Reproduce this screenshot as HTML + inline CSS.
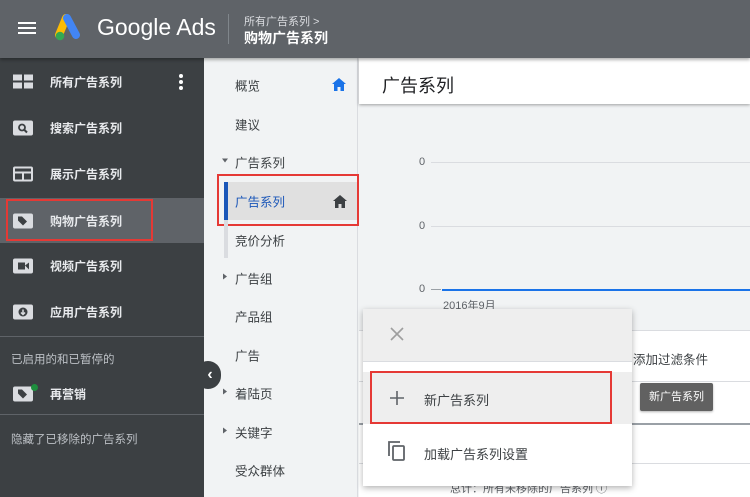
<!DOCTYPE html>
<html><head><meta charset="utf-8"><style>
*{margin:0;padding:0;box-sizing:border-box}
body{width:750px;height:497px;overflow:hidden;position:relative;font-family:"Liberation Sans","Noto Sans CJK SC",sans-serif;background:#f1f3f4}
.a{position:absolute}
.hdr{left:0;top:0;width:750px;height:58px;background:#5f6368;box-shadow:0 2px 3px rgba(0,0,0,.3);z-index:5}
.side{left:0;top:58px;width:204px;height:439px;background:#3c4043}
.it{position:absolute;left:0;width:204px;height:46px;color:#e8eaed;font-size:12px;font-weight:bold}
.it span{position:absolute;left:50px;top:50%;transform:translateY(-50%)}
.it svg{position:absolute;left:13px;top:50%;transform:translateY(-50%)}
.nav{left:204px;top:58px;width:154px;height:439px;background:#f1f3f4;border-right:1px solid #dadce0}
.n{position:absolute;left:31px;font-size:12.5px;color:#3c4043;transform:translateY(-50%)}
.tri{position:absolute;left:-12px;top:5px;width:0;height:0;border-top:3px solid transparent;border-bottom:3px solid transparent;border-left:4px solid #5f6368}
</style></head><body>
<div class="a hdr">
 <div class="a" style="left:18px;top:22px;width:18px;height:2px;background:#fff;box-shadow:0 5px 0 #fff,0 10px 0 #fff"></div>
 <svg class="a" style="left:54px;top:14px" width="30" height="28" viewBox="0 0 30 28"><path d="M12 4 L5 21" stroke="#fbbc04" stroke-width="8" stroke-linecap="round"/><path d="M13 4 L22 21" stroke="#4285f4" stroke-width="8" stroke-linecap="round"/><circle cx="6" cy="22" r="4.3" fill="#34a853"/></svg>
 <div class="a" style="left:97px;top:14px;color:#fff;font-size:23px">Google Ads</div>
 <div class="a" style="left:228px;top:14px;width:1px;height:30px;background:#80868b"></div>
 <div class="a" style="left:244px;top:13px;color:#dadce0;font-size:11px">所有广告系列 &gt;</div>
 <div class="a" style="left:244px;top:28px;color:#fff;font-size:14px;font-weight:bold">购物广告系列</div>
</div>
<div class="a side">
 <div class="it" style="top:1px"><svg width="20" height="15" viewBox="0 0 20 15"><rect x="0" y="0" width="9" height="6" fill="#dadce0"/><rect x="11" y="0" width="9" height="6" fill="#dadce0"/><rect x="0" y="8" width="9" height="6" fill="#dadce0"/><rect x="11" y="8" width="9" height="6" fill="#dadce0"/></svg><span>所有广告系列</span><div class="a" style="left:179px;top:15px;width:4px;height:4px;border-radius:2px;background:#fff;box-shadow:0 6px 0 #fff,0 12px 0 #fff"></div></div>
 <div class="it" style="top:47px"><svg width="20" height="15" viewBox="0 0 20 15"><rect width="20" height="15" rx="2" fill="#dadce0"/><circle cx="9" cy="7" r="3" stroke="#3c4043" stroke-width="1.8" fill="none"/><path d="M11 9 L14 12" stroke="#3c4043" stroke-width="2"/></svg><span>搜索广告系列</span></div>
 <div class="it" style="top:93px"><svg width="20" height="15" viewBox="0 0 20 15"><rect x="1" y="1" width="18" height="13" rx="1" stroke="#dadce0" stroke-width="2" fill="none"/><path d="M1 6 H19 M10 6 V14" stroke="#dadce0" stroke-width="2"/></svg><span>展示广告系列</span></div>
 <div class="it" style="top:140px;background:#5f6368;height:45px"><svg width="20" height="15" viewBox="0 0 20 15"><rect width="20" height="15" rx="2" fill="#dadce0"/><path d="M5 3 H9 L14 8 L10 12 L5 7Z" fill="#3c4043"/></svg><span>购物广告系列</span></div>
 <div class="a" style="left:6px;top:141px;width:147px;height:42px;border:2px solid #e53935"></div>
 <div class="it" style="top:185px"><svg width="20" height="15" viewBox="0 0 20 15"><rect width="20" height="15" rx="2" fill="#dadce0"/><rect x="5" y="4" width="7" height="7" fill="#3c4043"/><path d="M12 7 L16 4 V11Z" fill="#3c4043"/></svg><span>视频广告系列</span></div>
 <div class="it" style="top:231px"><svg width="20" height="15" viewBox="0 0 20 15"><rect width="20" height="15" rx="2" fill="#dadce0"/><circle cx="10" cy="7.5" r="4.5" fill="#3c4043"/><path d="M10 5 V9 M8 8 L10 10 L12 8" stroke="#dadce0" stroke-width="1.5" fill="none"/></svg><span>应用广告系列</span></div>
 <div class="a" style="left:0;top:278px;width:204px;height:1px;background:#5f6368"></div>
 <div class="a" style="left:11px;top:293px;color:#bdc1c6;font-size:11.5px">已启用的和已暂停的</div>
 <div class="it" style="top:313px"><svg width="20" height="15" viewBox="0 0 20 15"><rect width="20" height="15" rx="2" fill="#dadce0"/><path d="M5 3 H9 L14 8 L10 12 L5 7Z" fill="#3c4043"/></svg><div class="a" style="left:31px;top:13px;width:7px;height:7px;border-radius:4px;background:#1e8e3e"></div><span>再营销</span></div>
 <div class="a" style="left:0;top:356px;width:204px;height:1px;background:#5f6368"></div>
 <div class="a" style="left:11px;top:373px;color:#bdc1c6;font-size:11.5px">隐藏了已移除的广告系列</div>
</div>
<div class="a nav">
 <div class="n" style="top:27px">概览</div>
 <svg class="a" style="left:128px;top:20px" width="14" height="13" viewBox="0 0 14 13"><path d="M7 0 L14 6 H12 V13 H8.5 V9 H5.5 V13 H2 V6 H0Z" fill="#1a73e8"/></svg>
 <div class="n" style="top:66px">建议</div>
 <div class="n" style="top:104px"><div class="tri" style="border:3px solid transparent;border-top:4px solid #5f6368;border-bottom:0;left:-13px;top:6px"></div>广告系列</div>
 <div class="a" style="left:20px;top:124px;width:134px;height:38px;background:#e0e0e0"></div>
 <div class="a" style="left:20px;top:124px;width:4px;height:38px;background:#1a56b8"></div>
 <div class="n" style="top:143px;color:#1a56b8">广告系列</div>
 <svg class="a" style="left:129px;top:137px" width="14" height="13" viewBox="0 0 14 13"><path d="M7 0 L14 6 H12 V13 H8.5 V9 H5.5 V13 H2 V6 H0Z" fill="#3c4043"/></svg>
 <div class="a" style="left:13px;top:116px;width:142px;height:52px;border:2px solid #e53935"></div>
 <div class="a" style="left:20px;top:162px;width:4px;height:38px;background:#dadce0"></div>
 <div class="n" style="top:182px">竞价分析</div>
 <div class="n" style="top:220px"><div class="tri"></div>广告组</div>
 <div class="n" style="top:258px">产品组</div>
 <div class="n" style="top:297px">广告</div>
 <div class="n" style="top:335px"><div class="tri"></div>着陆页</div>
 <div class="n" style="top:374px"><div class="tri"></div>关键字</div>
 <div class="n" style="top:412px">受众群体</div>
</div>
<div class="a" style="left:195px;top:361px;width:26px;height:28px;border-radius:14px;background:#3c4043;color:#fff;font-size:16px;font-weight:bold;line-height:28px;text-align:center;padding-left:4px">‹</div>
<div class="a" style="left:359px;top:58px;width:391px;height:46px;background:#fff;box-shadow:0 1px 3px rgba(0,0,0,.35)"></div>
<div class="a" style="left:382px;top:72px;font-size:18px;color:#202124">广告系列</div>
<div class="a" style="left:431px;top:162px;width:319px;height:1px;background:#dadce0"></div>
<div class="a" style="left:431px;top:226px;width:319px;height:1px;background:#dadce0"></div>
<div class="a" style="left:442px;top:289px;width:308px;height:2px;background:#1a73e8"></div>
<div class="a" style="left:431px;top:289px;width:10px;height:1px;background:#9aa0a6"></div>
<div class="a" style="left:419px;top:156px;font-size:11px;color:#5f6368">0</div>
<div class="a" style="left:419px;top:220px;font-size:11px;color:#5f6368">0</div>
<div class="a" style="left:419px;top:283px;font-size:11px;color:#5f6368">0</div>
<div class="a" style="left:443px;top:297px;font-size:11px;color:#5f6368">2016年9月</div>
<div class="a" style="left:359px;top:330px;width:391px;height:52px;background:#fff;border-top:1px solid #dadce0;border-bottom:1px solid #dadce0"></div>
<div class="a" style="left:633px;top:349px;font-size:12.5px;color:#3c4043">添加过滤条件</div>
<div class="a" style="left:359px;top:382px;width:391px;height:115px;background:#fff"></div>
<div class="a" style="left:359px;top:423px;width:391px;height:2px;background:#9aa0a6"></div>
<div class="a" style="left:359px;top:463px;width:391px;height:1px;background:#dadce0"></div>
<div class="a" style="left:640px;top:383px;width:73px;height:28px;background:#616161;border-radius:2px;color:#fff;font-size:11px;line-height:28px;text-align:center;box-shadow:0 1px 2px rgba(0,0,0,.3)">新广告系列</div>
<div class="a" style="left:450px;top:480px;font-size:11px;color:#5f6368">总计：所有未移除的广告系列 ⓘ</div>
<div class="a" style="left:363px;top:309px;width:269px;height:177px;background:#fff;box-shadow:0 2px 6px rgba(0,0,0,.3)">
 <div class="a" style="left:0;top:0;width:269px;height:53px;background:#eeeeee;border-bottom:1px solid #dadce0"></div>
 <svg class="a" style="left:27px;top:18px" width="14" height="14" viewBox="0 0 14 14"><path d="M1 1 L13 13 M13 1 L1 13" stroke="#9e9e9e" stroke-width="1.6"/></svg>
 <div class="a" style="left:0;top:63px;width:269px;height:52px;background:#eeeeee"></div>
 <div class="a" style="left:7px;top:62px;width:242px;height:53px;border:2px solid #e53935"></div>
 <svg class="a" style="left:27px;top:82px" width="14" height="14" viewBox="0 0 14 14"><path d="M7 0 V14 M0 7 H14" stroke="#5f6368" stroke-width="1.6"/></svg>
 <div class="a" style="left:61px;top:81px;font-size:13px;color:#3c4043">新广告系列</div>
 <svg class="a" style="left:24px;top:131px" width="20" height="22" viewBox="0 0 20 22"><path d="M2 16 V2 H13" stroke="#5f6368" stroke-width="1.8" fill="none"/><rect x="6" y="6" width="11" height="14" rx="1" stroke="#5f6368" stroke-width="1.8" fill="none"/></svg>
 <div class="a" style="left:61px;top:135px;font-size:13px;color:#3c4043">加载广告系列设置</div>
</div>
</body></html>
